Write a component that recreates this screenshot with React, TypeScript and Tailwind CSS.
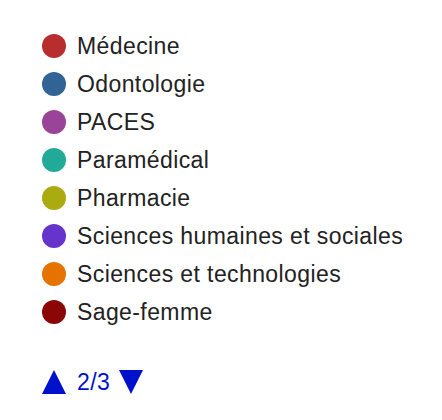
const items = [
  { label: "Médecine", color: "bg-[#b82e2e]" },
  { label: "Odontologie", color: "bg-[#316395]" },
  { label: "PACES", color: "bg-[#994499]" },
  { label: "Paramédical", color: "bg-[#22aa99]" },
  { label: "Pharmacie", color: "bg-[#aaaa11]" },
  { label: "Sciences humaines et sociales", color: "bg-[#6633cc]" },
  { label: "Sciences et technologies", color: "bg-[#e67300]" },
  { label: "Sage-femme", color: "bg-[#8b0707]" },
];

export default function App() {
  return (
    <div className="h-[420px] w-[442px] bg-white pl-[42px] pt-[27px] font-['Liberation_Sans',Arial,sans-serif] text-[#222222]">
      <ul>
        {items.map((item) => (
          <li key={item.label} className="flex h-[38px] items-center gap-[11px]">
            <span className={`h-6 w-6 shrink-0 rounded-full ${item.color}`} />
            <span className="text-[23px] leading-none tracking-[0.4px]">{item.label}</span>
          </li>
        ))}
      </ul>
      {/* pager */}
      <div className="mt-[39px] flex h-6 items-center text-[#0011cc]">
        <svg width="24" height="24" viewBox="0 0 24 24">
          <polygon points="12,0 24,24 0,24" fill="#0011cc" />
        </svg>
        <span className="ml-[11px] text-[23px] leading-none tracking-[0.4px]">2/3</span>
        <svg width="24" height="24" viewBox="0 0 24 24" className="ml-[9px]">
          <polygon points="0,0 24,0 12,24" fill="#0011cc" />
        </svg>
      </div>
    </div>
  );
}
